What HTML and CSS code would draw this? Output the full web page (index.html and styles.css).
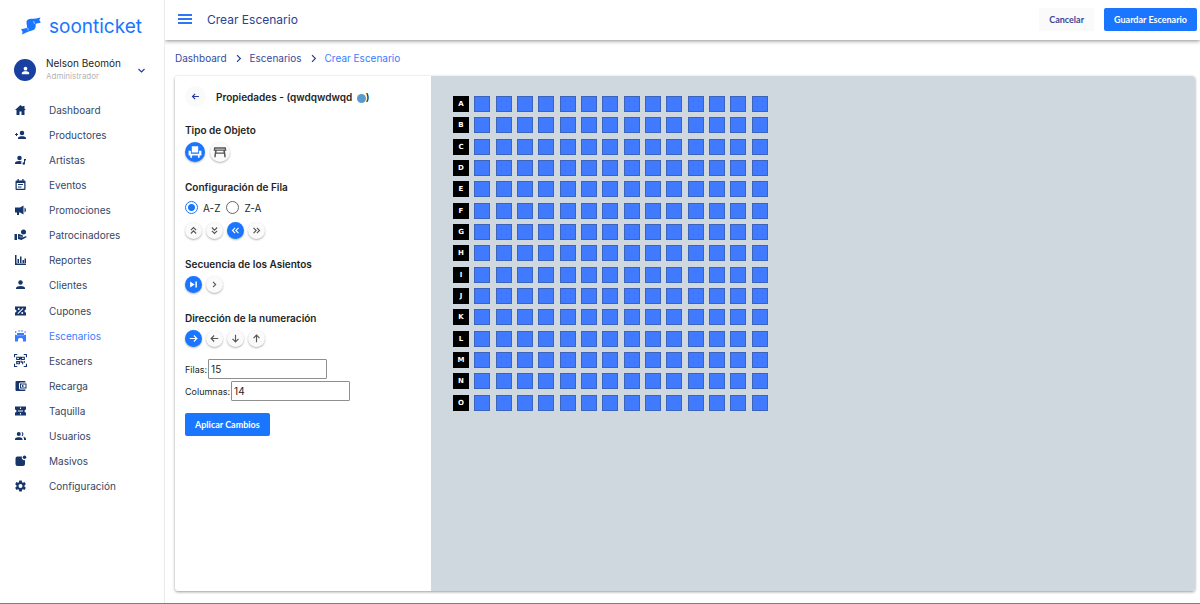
FILE: index.html
```html
<!DOCTYPE html>
<html lang="es">
<head>
<meta charset="utf-8">
<meta name="viewport" content="width=device-width, initial-scale=1">
<title>Crear Escenario</title>
<link rel="stylesheet" href="styles.css">
</head>
<body>
<div class="app">
  <aside class="sidebar">
    <a class="logo" href="#">
      <svg class="logo-mark" viewBox="0 0 20 18" aria-hidden="true"><path d="M5.500 5.500C5.500 2.500 8 1.800 11 1.800 14 1.800 16 1.200 19.500 .5L18.300 3 19.800 5.500C17.500 6.300 16 6.300 14.800 7 14.500 9 15 11 13.300 12.500 11.500 14 9 13.700 6.500 15L1 17.500 1.600 14.700 0 12.300 5.700 11C6.700 9.500 5.500 8 5.500 5.500Z"/><path class="logo-fold" d="M14.300 6.800C13 6.800 12.500 5.500 13 4M5.800 11.200C7.500 11 7.300 12.300 7 13.500"/></svg>
      <span>soonticket</span>
    </a>
    <button class="profile" type="button">
      <span class="avatar"><svg viewBox="0 0 24 24"><circle cx="12" cy="8" r="4"/><path d="M4 20v-2.500c0-5 16-5 16 0V20z"/></svg></span>
      <span class="who"><span class="name">Nelson Beomón</span><span class="role">Administrador</span></span>
      <svg class="line chevron" viewBox="0 0 24 24"><path d="M4 8l8 8 8-8"/></svg>
    </button>
    <nav class="menu">
      <a href="#"><svg viewBox="0 0 24 24"><path d="M12 2L1 12h3v10h6v-7h4v7h6V12h3l-3-2.700V4h-4v1.700z"/></svg>Dashboard</a>
      <a href="#"><svg viewBox="0 0 24 24"><circle cx="15" cy="8" r="4.500"/><path d="M7 20v-2c0-5 16-5 16 0v2zM3 8h2v2h2v2H5v2H3v-2H1v-2h2z"/></svg>Productores</a>
      <a href="#"><svg viewBox="0 0 24 24"><circle cx="10" cy="8" r="4.500"/><path d="M1 20v-2c0-4 9-5.500 14-3-2 1-2 3-1 5zM19 10h4v3h-2v6a2.500 2.500 0 1 1-2-2.500z"/></svg>Artistas</a>
      <a href="#"><svg viewBox="0 0 24 24"><path fill-rule="evenodd" d="M20 3h-2V0h-2.500v3h-7V0H6v3H4a2 2 0 0 0-2 2v15a2 2 0 0 0 2 2h16a2 2 0 0 0 2-2V5a2 2 0 0 0-2-2zM19.500 19.500h-15V8h15z"/><path d="M7 10h10v2.200H7zM7 15h7v2.200H7z"/></svg>Eventos</a>
      <a href="#"><svg viewBox="0 0 24 24"><path d="M1 7h10l7-4v18l-7-4H9v5H5v-5H1zM20 7c4 2 4 8 0 10z"/></svg>Promociones</a>
      <a href="#"><svg viewBox="0 0 24 24"><path d="M0 10h5v12H0zM7 10h2l8 3v2.500h-5l-2-.7-.4 1 2.400.9H17l5-2c1.500-.3 2.500 1 2 2L14 22l-7-2z"/><circle cx="18" cy="6" r="5"/></svg>Patrocinadores</a>
      <a href="#"><svg viewBox="0 0 24 24"><path d="M1 2h3v17h19v3H1zM6 10h3v8H6zM11 5h3v13h-3zM16 12h3v6h-3zM20 9h3v9h-3z"/></svg>Reportes</a>
      <a href="#"><svg viewBox="0 0 24 24"><circle cx="12" cy="7" r="4.500"/><path d="M3 20v-2c0-5.500 18-5.500 18 0v2z"/></svg>Clientes</a>
      <a href="#"><svg viewBox="0 0 24 24"><path fill-rule="evenodd" d="M1 3h22v6a3 3 0 0 0 0 6v6H1v-6a3 3 0 0 0 0-6zM16.500 6L6 16.500 7.500 18 18 7.500zM8.500 6a2 2 0 1 0 0 4 2 2 0 0 0 0-4zM15.500 14a2 2 0 1 0 0 4 2 2 0 0 0 0-4z"/></svg>Cupones</a>
      <a href="#" class="current" aria-current="page"><svg viewBox="0 0 24 24"><path d="M1 9l4 1.500h14L23 9v14h-6v-4c0-4-10-4-10 0v4H1zM1 2l4 2-4 2zM8 0l4 2-4 2zM14 0l4 2-4 2zM20 2l4 2-4 2zM5 6h14v4H5z"/></svg>Escenarios</a>
      <a href="#"><svg class="line wide" viewBox="0 0 24 24"><path d="M1 6V1h5M18 1h5v5M23 18v5h-5M6 23H1v-5M5 6h5v4H5zM14 6h5v4h-5zM5 14h5v4H5zM13 12v3h3v4M19 13v3M12 5v5"/></svg>Escaners</a>
      <a href="#"><svg viewBox="0 0 24 24"><path fill-rule="evenodd" d="M4 2h16a2 2 0 0 1 2 2v1H12a3 3 0 0 0-3 3v8a3 3 0 0 0 3 3h10v1a2 2 0 0 1-2 2H4a2 2 0 0 1-2-2V4a2 2 0 0 1 2-2zM11 7h13v10H11zm2 2v6h9V9z"/><circle cx="16.500" cy="12" r="1.800"/></svg>Recarga</a>
      <a href="#"><svg viewBox="0 0 24 24"><path fill-rule="evenodd" d="M1 3h22v6a3 3 0 0 0 0 6v6H1v-6a3 3 0 0 0 0-6zM11 5v3h2V5zM11 16v3h2v-3zM7 11v2h10v-2z"/></svg>Taquilla</a>
      <a href="#"><svg viewBox="0 0 24 24"><circle cx="8.500" cy="8" r="4"/><path d="M1 20v-2c0-5 15-5 15 0v2zM14 4c5-1 5 9 0 8 2-2 2-6 0-8zM17 13.500c4 .5 6 2 6 4.500v2h-4v-2c0-2-.5-3.300-2-4.500z"/></svg>Usuarios</a>
      <a href="#"><svg viewBox="0 0 24 24"><path d="M15 3a5 5 0 0 0 6 7v8a4 4 0 0 1-4 4H6a4 4 0 0 1-4-4V7a4 4 0 0 1 4-4z"/><circle cx="20" cy="4.500" r="3.500"/></svg>Masivos</a>
      <a href="#"><svg viewBox="0 0 24 24"><path fill-rule="evenodd" d="M9.500 1h5l.6 3.300 1.900 1.100 3.200-1.200 2.500 4.300-2.600 2.200v2.600l2.600 2.200-2.500 4.300-3.200-1.200-1.900 1.100-.6 3.300h-5l-.6-3.300L7 18.600l-3.200 1.200-2.500-4.300 2.600-2.200v-2.600L1.300 8.500l2.500-4.300L7 5.400l1.900-1.100zM12 8a4 4 0 1 0 0 8 4 4 0 0 0 0-8z"/></svg>Configuración</a>
    </nav>
  </aside>
  <div class="main">
    <header class="topbar">
      <button class="burger" type="button" aria-label="Menú"><svg class="line" viewBox="0 0 14 10"><path d="M0 1h14M0 5h14M0 9h14"/></svg></button>
      <h1>Crear Escenario</h1>
      <button class="btn plain" type="button">Cancelar</button>
      <button class="btn primary" type="button">Guardar Escenario</button>
    </header>
    <nav class="crumbs" aria-label="Ruta">
      <a href="#">Dashboard</a>
      <svg class="line" viewBox="0 0 24 24"><path d="M8 3l9 9-9 9"/></svg>
      <a href="#">Escenarios</a>
      <svg class="line" viewBox="0 0 24 24"><path d="M8 3l9 9-9 9"/></svg>
      <a href="#" class="current" aria-current="page">Crear Escenario</a>
    </nav>
    <main class="card">
      <form class="props">
        <div class="props-head">
          <button class="back" type="button" aria-label="Volver"><svg class="line" viewBox="0 0 24 24"><path d="M21 12H4M11 5l-7 7 7 7"/></svg></button>
          <h2>Propiedades - (qwdqwdwqd <span class="dot"></span>)</h2>
        </div>
        <section class="group">
          <h3>Tipo de Objeto</h3>
          <div class="options large">
            <button class="round on" type="button" aria-label="Asiento"><svg viewBox="0 0 24 24"><path d="M6.500 2h11v11h-11zM1 10h4v5h14v-5h4v8h-3v4h-3v-4H7v4H4v-4H1z"/></svg></button>
            <button class="round" type="button" aria-label="Mesa"><svg viewBox="0 0 24 24"><path fill-rule="evenodd" d="M2 4h20l1 6h-2.500l1.500 11h-2.500l-.9-6H5.400l-.9 6H2l1.500-11H1zM6.300 10l-.5 3h12.400l-.5-3zM3.800 6.500l-.2 1h16.800l-.2-1z"/></svg></button>
          </div>
        </section>
        <section class="group">
          <h3>Configuración de Fila</h3>
          <div class="radios">
            <label><input type="radio" name="orden" checked>A-Z</label>
            <label><input type="radio" name="orden">Z-A</label>
          </div>
          <div class="options">
            <button class="round" type="button" aria-label="Arriba"><svg class="line" viewBox="0 0 24 24"><path d="M5 11l7-7 7 7M5 20l7-7 7 7"/></svg></button>
            <button class="round" type="button" aria-label="Abajo"><svg class="line" viewBox="0 0 24 24"><path d="M5 4l7 7 7-7M5 13l7 7 7-7"/></svg></button>
            <button class="round on" type="button" aria-label="Izquierda"><svg class="line" viewBox="0 0 24 24"><path d="M11 5l-7 7 7 7M20 5l-7 7 7 7"/></svg></button>
            <button class="round" type="button" aria-label="Derecha"><svg class="line" viewBox="0 0 24 24"><path d="M4 5l7 7-7 7M13 5l7 7-7 7"/></svg></button>
          </div>
        </section>
        <section class="group">
          <h3>Secuencia de los Asientos</h3>
          <div class="options">
            <button class="round on" type="button" aria-label="Consecutiva"><svg viewBox="0 0 24 24"><path d="M3 4l12 8-12 8zM17 4h4v16h-4z"/></svg></button>
            <button class="round" type="button" aria-label="Alterna"><svg class="line" viewBox="0 0 24 24"><path d="M8 5l7 7-7 7"/></svg></button>
          </div>
        </section>
        <section class="group">
          <h3>Dirección de la numeración</h3>
          <div class="options">
            <button class="round on" type="button" aria-label="A la derecha"><svg class="line" viewBox="0 0 24 24"><path d="M2 12h19M13 4l8 8-8 8"/></svg></button>
            <button class="round" type="button" aria-label="A la izquierda"><svg class="line" viewBox="0 0 24 24"><path d="M22 12H3M11 4l-8 8 8 8"/></svg></button>
            <button class="round" type="button" aria-label="Hacia abajo"><svg class="line" viewBox="0 0 24 24"><path d="M12 2v19M4 13l8 8 8-8"/></svg></button>
            <button class="round" type="button" aria-label="Hacia arriba"><svg class="line" viewBox="0 0 24 24"><path d="M12 22V3M4 11l8-8 8 8"/></svg></button>
          </div>
        </section>
        <div class="fields">
          <div class="field"><label for="filas">Filas:</label><input id="filas" type="text" inputmode="numeric" value="15"></div>
          <div class="field"><label for="columnas">Columnas:</label><input id="columnas" type="text" inputmode="numeric" value="14"></div>
        </div>
        <button class="btn primary apply" type="button">Aplicar Cambios</button>
      </form>
      <div class="stage"><div class="seats" id="seats"></div></div>
    </main>
  </div>
</div>
<script src="seats.js"></script>
</body>
</html>
```

FILE: styles.css
```css
* { box-sizing: border-box; }
body {
  margin: 0;
  font-family: Inter, "Open Sans", sans-serif;
  font-size: 10px;
  color: #1d1f24;
  background: #fff;
}
button, input { font: inherit; color: inherit; }
button { border: 0; padding: 0; background: none; cursor: pointer; }
a { color: inherit; text-decoration: none; }
h1, h2, h3 { margin: 0; }
svg { display: block; fill: currentColor; flex: none; }
.line { fill: none; stroke: currentColor; stroke-width: 3; }

.app {
  display: flex;
  min-height: 100vh;
  border-bottom: 1px solid #7d8078;
}
.sidebar {
  flex: none;
  width: 165px;
  border-right: 1px solid #ebebeb;
}
.logo {
  display: flex;
  align-items: center;
  gap: 8px;
  height: 52px;
  padding-left: 21px;
  font-size: 19px;
  color: #1a75ff;
}
.logo-mark { width: 20px; height: 18px; }
.logo-fold { fill: none; stroke: #fff; stroke-width: 0.6; }

.profile {
  display: flex;
  align-items: center;
  width: 100%;
  height: 36px;
  padding: 0 18px 0 14px;
  text-align: left;
}
.avatar {
  display: grid;
  place-items: center;
  width: 22px;
  height: 22px;
  border-radius: 50%;
  background: #1840a0;
  color: #fff;
}
.avatar svg { width: 11px; height: 11px; }
.who { flex: 1; padding-left: 10px; }
.who span { display: block; line-height: 13px; }
.name { color: #1d1f24; }
.role { font-size: 8px; color: #b5b5b5; }
.chevron { width: 9px; height: 9px; color: #1f3b9b; }

.menu {
  display: flex;
  flex-direction: column;
  height: 402px;
  margin-top: 9px;
}
.menu a {
  flex: 1;
  display: flex;
  align-items: center;
  gap: 22px;
  padding-left: 14px;
  color: #344767;
}
.menu svg { width: 13px; height: 12px; color: #16356b; }
.menu .line { stroke-width: 2; }
.menu .wide { height: 13px; }
.menu .current, .menu .current svg { color: #3b7bff; }

.main {
  flex: 1;
  min-width: 0;
  display: flex;
  flex-direction: column;
}
.topbar {
  display: flex;
  align-items: center;
  height: 40px;
  padding: 0 3px 2px 13px;
  background: #fff;
  box-shadow: 0 1px 4px rgba(0, 0, 0, 0.45);
  clip-path: inset(0 0 -8px 0);
}
.burger { color: #2f76f5; }
.burger svg { width: 14px; height: 10px; stroke-width: 2; }
.topbar h1 {
  flex: 1;
  padding-left: 15px;
  font-size: 12px;
  font-weight: 400;
  color: #2c4194;
}
.btn {
  height: 23px;
  padding: 0 10px;
  border-radius: 2px;
  font-family: Lato, Inter, sans-serif;
  font-size: 9px;
  font-weight: 700;
}
.plain { margin-right: 10px; background: #fafafa; color: #3a4796; }
.primary { background: #1a75ff; color: #fff; }

.crumbs {
  display: flex;
  align-items: center;
  gap: 7px;
  height: 36px;
  padding-left: 10px;
  color: #354a9c;
}
.crumbs svg { width: 9px; height: 9px; color: #22368c; }
.crumbs .current { color: #3b7bff; }

.card {
  flex: 1;
  display: flex;
  margin: 0 5px 12px 10px;
  border-radius: 3px;
  background: #fff;
  box-shadow: 0 1px 3px rgba(0, 0, 0, 0.4);
  overflow: hidden;
}
.props {
  flex: none;
  width: 256px;
  padding: 10px;
}
.props-head { display: flex; align-items: center; gap: 10px; }
.props h2, .props h3 { font-size: 10px; font-weight: 600; line-height: 14px; }
.back {
  display: grid;
  place-items: center;
  width: 21px;
  height: 21px;
  border-radius: 50%;
  background: #fafafa;
  color: #26389a;
}
.back svg { width: 9px; height: 9px; }
.dot {
  display: inline-block;
  width: 9px;
  height: 9px;
  margin-left: 2px;
  border-radius: 50%;
  background: #5b9bcb;
  vertical-align: -2px;
}
.group { padding-top: 16px; }
.group + .group { padding-top: 18px; }
.options { display: flex; gap: 4px; margin-top: 5px; }
.round {
  display: grid;
  place-items: center;
  width: 17px;
  height: 17px;
  border-radius: 50%;
  background: #fafafa;
  color: #555;
  box-shadow: 0 1px 2px rgba(0, 0, 0, 0.3);
}
.round svg { width: 9px; height: 9px; }
.round.on { background: #1a75ff; color: #fff; }
.options.large { gap: 5px; }
.large .round { width: 20px; height: 20px; }
.large svg { width: 14px; height: 14px; }
.radios { display: flex; gap: 6px; padding: 7px 0 3px; }
.radios label { display: flex; align-items: center; gap: 5px; }
.radios input {
  appearance: none;
  width: 13px;
  height: 13px;
  margin: 0;
  border: 1px solid #666;
  border-radius: 50%;
}
.radios input:checked {
  border-color: #1a75ff;
  background: radial-gradient(circle, #1a75ff 3px, transparent 4px);
}
.fields { display: grid; gap: 2px; padding-top: 12px; }
.field { display: flex; align-items: center; gap: 1px; }
.field label { font-size: 9px; }
.field input {
  width: 119px;
  height: 20px;
  padding: 0 2px;
  border: 1px solid #8f8f8f;
  border-radius: 1px;
  background: #fff;
}
.apply { margin-top: 12px; }

.stage {
  flex: 1;
  min-width: 0;
  padding: 20px 22px;
  background: #cfd8df;
}
.seats {
  display: grid;
  grid-template-columns: repeat(15, 16px);
  grid-auto-rows: 16px;
  place-content: space-between;
  width: 315px;
  height: 315px;
}
.row-label {
  display: grid;
  place-items: center;
  background: #000;
  color: #fff;
  font-family: "DejaVu Sans", sans-serif;
  font-size: 7px;
  font-weight: 700;
}
.seat {
  border: 1px solid #3d64bd;
  background: #407bff;
}
```

FILE: seats.js
```js
const rows = 15;
const columns = 14;
const seats = document.getElementById('seats');

for (let r = 0; r < rows; r++) {
  const letter = String.fromCharCode(65 + r);
  const label = document.createElement('span');
  label.className = 'row-label';
  label.textContent = letter;
  seats.append(label);
  for (let c = 1; c <= columns; c++) {
    const seat = document.createElement('button');
    seat.type = 'button';
    seat.className = 'seat';
    seat.setAttribute('aria-label', letter + c);
    seats.append(seat);
  }
}
```
